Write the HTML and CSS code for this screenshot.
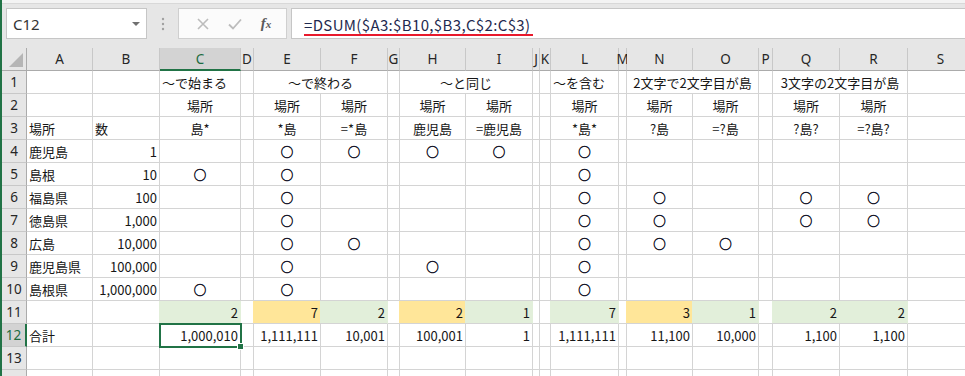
FILE: index.html
```html
<!DOCTYPE html>
<html lang="ja">
<head>
<meta charset="utf-8">
<title>DSUM</title>
<link rel="stylesheet" href="styles.css">
</head>
<body>
<div class="app">
  <div class="topbar">
    <div class="fbar">
      <div class="namebox"><span class="nb-text">C12</span><span class="nb-arrow"></span></div>
      <div class="dots"><svg width="4" height="14" viewBox="0 0 4 14"><circle cx="2" cy="2" r="1.2" fill="#a0a0a0"/><circle cx="2" cy="7" r="1.2" fill="#a0a0a0"/><circle cx="2" cy="12" r="1.2" fill="#a0a0a0"/></svg></div>
      <div class="btns">
        <svg class="ico" width="14" height="14" viewBox="0 0 14 14"><path d="M2 2 L12 12 M12 2 L2 12" stroke="#bcbcbc" stroke-width="1.6" fill="none"/></svg>
        <svg class="ico" width="16" height="14" viewBox="0 0 16 14"><path d="M2 7.5 L6 11.5 L14 2.5" stroke="#bcbcbc" stroke-width="1.8" fill="none"/></svg>
        <span class="fx">f<span class="fx-x">x</span></span>
      </div>
      <div class="formula"><span class="ftext">=DSUM($A3:$B10,$B3,C$2:C$3)</span></div>
    </div>
  </div>
  <div class="sheet">
    <!-- header -->
    <div class="ch corner"><svg width="14" height="14" viewBox="0 0 14 14"><path d="M14 0 L14 14 L0 14 Z" fill="#b5b5b5"/></svg></div>
    <div class="ch">A</div><div class="ch">B</div><div class="ch sel">C</div><div class="ch">D</div><div class="ch">E</div><div class="ch">F</div><div class="ch">G</div><div class="ch">H</div><div class="ch">I</div><div class="ch">J</div><div class="ch">K</div><div class="ch">L</div><div class="ch">M</div><div class="ch">N</div><div class="ch">O</div><div class="ch">P</div><div class="ch">Q</div><div class="ch">R</div><div class="ch">S</div>
    <!-- row 1 -->
    <div class="rh">1</div><div class="c"></div><div class="c"></div><div class="c l">〜で始まる</div><div class="c"></div><div class="c m span2">〜で終わる</div><div class="c"></div><div class="c m span2">〜と同じ</div><div class="c"></div><div class="c"></div><div class="c l">〜を含む</div><div class="c"></div><div class="c m span2">2文字で2文字目が島</div><div class="c"></div><div class="c m span2">3文字の2文字目が島</div><div class="c"></div>
    <!-- row 2 -->
    <div class="rh">2</div><div class="c"></div><div class="c"></div><div class="c m">場所</div><div class="c"></div><div class="c m">場所</div><div class="c m">場所</div><div class="c"></div><div class="c m">場所</div><div class="c m">場所</div><div class="c"></div><div class="c"></div><div class="c m">場所</div><div class="c"></div><div class="c m">場所</div><div class="c m">場所</div><div class="c"></div><div class="c m">場所</div><div class="c m">場所</div><div class="c"></div>
    <!-- row 3 -->
    <div class="rh">3</div><div class="c l">場所</div><div class="c l">数</div><div class="c m">島*</div><div class="c"></div><div class="c m">*島</div><div class="c m">=*島</div><div class="c"></div><div class="c m">鹿児島</div><div class="c m">=鹿児島</div><div class="c"></div><div class="c"></div><div class="c m">*島*</div><div class="c"></div><div class="c m">?島</div><div class="c m">=?島</div><div class="c"></div><div class="c m">?島?</div><div class="c m">=?島?</div><div class="c"></div>
    <!-- row 4 -->
    <div class="rh">4</div><div class="c l">鹿児島</div><div class="c r">1</div><div class="c"></div><div class="c"></div><div class="c m o">○</div><div class="c m o">○</div><div class="c"></div><div class="c m o">○</div><div class="c m o">○</div><div class="c"></div><div class="c"></div><div class="c m o">○</div><div class="c"></div><div class="c"></div><div class="c"></div><div class="c"></div><div class="c"></div><div class="c"></div><div class="c"></div>
    <!-- row 5 -->
    <div class="rh">5</div><div class="c l">島根</div><div class="c r">10</div><div class="c m o">○</div><div class="c"></div><div class="c m o">○</div><div class="c"></div><div class="c"></div><div class="c"></div><div class="c"></div><div class="c"></div><div class="c"></div><div class="c m o">○</div><div class="c"></div><div class="c"></div><div class="c"></div><div class="c"></div><div class="c"></div><div class="c"></div><div class="c"></div>
    <!-- row 6 -->
    <div class="rh">6</div><div class="c l">福島県</div><div class="c r">100</div><div class="c"></div><div class="c"></div><div class="c m o">○</div><div class="c"></div><div class="c"></div><div class="c"></div><div class="c"></div><div class="c"></div><div class="c"></div><div class="c m o">○</div><div class="c"></div><div class="c m o">○</div><div class="c"></div><div class="c"></div><div class="c m o">○</div><div class="c m o">○</div><div class="c"></div>
    <!-- row 7 -->
    <div class="rh">7</div><div class="c l">徳島県</div><div class="c r">1,000</div><div class="c"></div><div class="c"></div><div class="c m o">○</div><div class="c"></div><div class="c"></div><div class="c"></div><div class="c"></div><div class="c"></div><div class="c"></div><div class="c m o">○</div><div class="c"></div><div class="c m o">○</div><div class="c"></div><div class="c"></div><div class="c m o">○</div><div class="c m o">○</div><div class="c"></div>
    <!-- row 8 -->
    <div class="rh">8</div><div class="c l">広島</div><div class="c r">10,000</div><div class="c"></div><div class="c"></div><div class="c m o">○</div><div class="c m o">○</div><div class="c"></div><div class="c"></div><div class="c"></div><div class="c"></div><div class="c"></div><div class="c m o">○</div><div class="c"></div><div class="c m o">○</div><div class="c m o">○</div><div class="c"></div><div class="c"></div><div class="c"></div><div class="c"></div>
    <!-- row 9 -->
    <div class="rh">9</div><div class="c l">鹿児島県</div><div class="c r">100,000</div><div class="c"></div><div class="c"></div><div class="c m o">○</div><div class="c"></div><div class="c"></div><div class="c m o">○</div><div class="c"></div><div class="c"></div><div class="c"></div><div class="c m o">○</div><div class="c"></div><div class="c"></div><div class="c"></div><div class="c"></div><div class="c"></div><div class="c"></div><div class="c"></div>
    <!-- row 10 -->
    <div class="rh">10</div><div class="c l">島根県</div><div class="c r">1,000,000</div><div class="c m o">○</div><div class="c"></div><div class="c m o">○</div><div class="c"></div><div class="c"></div><div class="c"></div><div class="c"></div><div class="c"></div><div class="c"></div><div class="c m o">○</div><div class="c"></div><div class="c"></div><div class="c"></div><div class="c"></div><div class="c"></div><div class="c"></div><div class="c"></div>
    <!-- row 11 -->
    <div class="rh">11</div><div class="c"></div><div class="c"></div><div class="c r fill green">2</div><div class="c"></div><div class="c r fill yellow">7</div><div class="c r fill green">2</div><div class="c"></div><div class="c r fill yellow">2</div><div class="c r fill green">1</div><div class="c"></div><div class="c"></div><div class="c r fill green">7</div><div class="c"></div><div class="c r fill yellow">3</div><div class="c r fill green">1</div><div class="c"></div><div class="c r fill green">2</div><div class="c r fill green">2</div><div class="c"></div>
    <!-- row 12 -->
    <div class="rh selrow">12</div><div class="c l">合計</div><div class="c"></div><div class="c r active">1,000,010</div><div class="c"></div><div class="c r">1,111,111</div><div class="c r">10,001</div><div class="c"></div><div class="c r">100,001</div><div class="c r">1</div><div class="c"></div><div class="c"></div><div class="c r">1,111,111</div><div class="c"></div><div class="c r">11,100</div><div class="c r">10,000</div><div class="c"></div><div class="c r">1,100</div><div class="c r">1,100</div><div class="c"></div>
    <!-- row 13 -->
    <div class="rh">13</div><div class="c"></div><div class="c"></div><div class="c"></div><div class="c"></div><div class="c"></div><div class="c"></div><div class="c"></div><div class="c"></div><div class="c"></div><div class="c"></div><div class="c"></div><div class="c"></div><div class="c"></div><div class="c"></div><div class="c"></div><div class="c"></div><div class="c"></div><div class="c"></div><div class="c"></div>
    <!-- row 14 (only its top edge is in view) -->
    <div class="rh"></div><div class="c"></div><div class="c"></div><div class="c"></div><div class="c"></div><div class="c"></div><div class="c"></div><div class="c"></div><div class="c"></div><div class="c"></div><div class="c"></div><div class="c"></div><div class="c"></div><div class="c"></div><div class="c"></div><div class="c"></div><div class="c"></div><div class="c"></div><div class="c"></div><div class="c"></div>
  </div>
</div>
</body>
</html>
```
FILE: styles.css
```css
html, body {
  margin: 0;
  padding: 0;
  background: #fff;
}
.app {
  width: 965px;
  height: 376px;
  overflow: hidden;
  box-sizing: border-box;
  border-left: 2px solid #217346;
  font-family: "Noto Sans CJK JP", "Noto Sans", sans-serif;
  color: #161616;
}
.topbar {
  height: 48px;
  box-sizing: border-box;
  padding-top: 8px;
  background: linear-gradient(#f3f3f3 0 3px, #d8d8d8 3px 4px, #e6e6e6 4px);
}
.fbar {
  display: flex;
  height: 31px;
  margin-left: 4px;
  margin-right: -4px;
}
.namebox {
  width: 141px;
  box-sizing: border-box;
  border: 1px solid #c6c6c6;
  background: #fff;
  display: flex;
  align-items: center;
  justify-content: space-between;
  padding: 0 6px 0 6px;
}
.nb-text {
  font-family: "Noto Sans", "Liberation Sans", sans-serif;
  font-size: 15px;
  color: #333;
}
.nb-arrow {
  width: 0;
  height: 0;
  border-left: 4px solid transparent;
  border-right: 4px solid transparent;
  border-top: 4px solid #707070;
}
.dots {
  width: 31px;
  display: flex;
  align-items: center;
  justify-content: center;
}
.btns {
  width: 109px;
  box-sizing: border-box;
  border: 1px solid #cfcfcf;
  background: #fbfbfb;
  display: flex;
  align-items: center;
  justify-content: space-around;
  padding: 0 6px 0 8px;
}
.fx {
  font-family: "Liberation Serif", serif;
  font-style: italic;
  font-weight: bold;
  font-size: 15px;
  color: #5a5a5a;
}
.fx-x {
  font-size: 11px;
}
.formula {
  flex: 1;
  margin-left: 4px;
  box-sizing: border-box;
  border: 1px solid #c6c6c6;
  background: #fff;
  display: flex;
  align-items: center;
  padding-left: 12px;
}
.ftext {
  font-size: 15px;
  letter-spacing: 0.35px;
  color: #1f2a50;
  line-height: 19px;
  border-bottom: 2px solid #e8192c;
  padding-right: 3px;
  margin-top: 3px;
}
.sheet {
  display: grid;
  grid-template-columns: 25px 66px 67px 81px 13px 67px 67px 12px 66px 67px 7px 11px 68px 8px 66px 66px 14px 67px 68px 66px;
  grid-auto-rows: 23px;
  font-size: 13px;
}
.ch {
  box-sizing: border-box;
  background: #e6e6e6;
  border-right: 1px solid #c8c8c8;
  border-bottom: 1px solid #ababab;
  display: flex;
  align-items: center;
  justify-content: center;
  color: #262626;
  font-family: "Noto Sans", "Liberation Sans", sans-serif;
  font-size: 13.5px;
}
.ch.corner {
  justify-content: flex-end;
  align-items: flex-end;
  padding: 0 3px 3px 0;
  border-right-color: #ababab;
}
.ch.sel {
  background: #d3d3d3;
  border-bottom: 2px solid #217346;
  color: #1d6b40;
}
.rh {
  box-sizing: border-box;
  background: #e6e6e6;
  border-right: 1px solid #ababab;
  border-bottom: 1px solid #c8c8c8;
  display: flex;
  align-items: center;
  justify-content: center;
  color: #262626;
  font-family: "Noto Sans", "Liberation Sans", sans-serif;
  font-size: 13.5px;
}
.rh.selrow {
  background: #d3d3d3;
  border-right: 2px solid #217346;
  color: #1d6b40;
}
.c {
  box-sizing: border-box;
  border-right: 1px solid #d4d4d4;
  border-bottom: 1px solid #d4d4d4;
  display: flex;
  align-items: center;
  padding: 0 2px;
  white-space: nowrap;
  overflow: visible;
  min-width: 0;
}
.l { justify-content: flex-start; }
.r { justify-content: flex-end; }
.m { justify-content: center; }
.span2 { grid-column: span 2; }
.o {
  font-size: 12.5px;
  color: #141428;
  -webkit-text-stroke: 0.45px #141428;
}
.fill { margin-left: -1px; }
.green { background: #e2efda; border-right-color: #e2efda; }
.yellow { background: #ffe699; border-right-color: #ffe699; }
.active {
  position: relative;
  z-index: 1;
  outline: 2px solid #217346;
  outline-offset: -1px;
}
.active::after {
  content: "";
  position: absolute;
  right: -4px;
  bottom: -4px;
  width: 5px;
  height: 5px;
  background: #217346;
  border: 1px solid #fff;
}
```
